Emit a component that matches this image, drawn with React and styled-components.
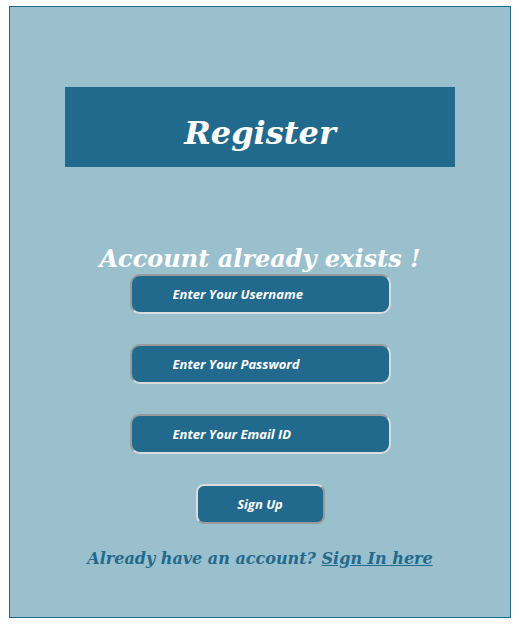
import React from 'react';
import styled, { createGlobalStyle } from 'styled-components';

const color = {
	page: '#ffffff',
	panel: '#9abfcd',
	blue: '#226a8d',
	white: '#ffffff',
	edgeDark: '#9a9a9a',
	edgeLight: '#dcdcdc',
};

const GlobalStyle = createGlobalStyle`
	body {
		margin: 0;
		background: ${color.page};
	}
	* {
		box-sizing: border-box;
	}
`;

export default function App() {
	return (
		<>
			<GlobalStyle />
			<Panel>
				<Header>
					<Title>Register</Title>
				</Header>
				<Message>Account already exists !</Message>
				<Form onSubmit={(e) => e.preventDefault()}>
					<Field type="text" placeholder="Enter Your Username" />
					<Field type="password" placeholder="Enter Your Password" />
					<Field type="email" placeholder="Enter Your Email ID" />
					<SubmitButton type="submit">Sign Up</SubmitButton>
				</Form>
				<Footer>
					Already have an account? <FooterLink href="#">Sign In here</FooterLink>
				</Footer>
			</Panel>
		</>
	);
}

const Panel = styled.div`
	width: 502px;
	height: 612px;
	margin: 6px 0 0 9px;
	padding-top: 80px;
	display: flex;
	flex-direction: column;
	align-items: center;
	border: 1px solid ${color.blue};
	background-color: ${color.panel};
`;

const Header = styled.div`
	width: 390px;
	height: 80px;
	padding-top: 12px;
	display: flex;
	align-items: center;
	justify-content: center;
	background-color: ${color.blue};
`;

const Title = styled.h1`
	margin: 0;
	font-family: 'DejaVu Serif', serif;
	font-style: italic;
	font-weight: bold;
	font-size: 32px;
	line-height: 1;
	color: ${color.white};
`;

const Message = styled.h2`
	margin: 78px 0 1px;
	font-family: 'DejaVu Serif', serif;
	font-style: italic;
	font-weight: bold;
	font-size: 24px;
	line-height: 28px;
	color: ${color.white};
`;

const Form = styled.form`
	display: flex;
	flex-direction: column;
	align-items: center;
	gap: 30px;
`;

const Field = styled.input`
	width: 261px;
	height: 40px;
	padding: 0 0 0 41px;
	border: 2px solid;
	border-color: ${color.edgeDark} ${color.edgeLight} ${color.edgeLight} ${color.edgeDark};
	border-radius: 10px;
	background-color: ${color.blue};
	font-family: 'Open Sans', sans-serif;
	font-style: italic;
	font-weight: bold;
	font-size: 13px;
	color: ${color.white};
	outline: none;

	&::placeholder {
		color: ${color.white};
		opacity: 1;
	}
`;

const SubmitButton = styled.button`
	width: 129px;
	height: 40px;
	border: 2px solid;
	border-color: ${color.edgeLight} ${color.edgeDark} ${color.edgeDark} ${color.edgeLight};
	border-radius: 8px;
	background-color: ${color.blue};
	font-family: 'Open Sans', sans-serif;
	font-style: italic;
	font-weight: bold;
	font-size: 13px;
	color: ${color.white};
	cursor: pointer;
`;

const Footer = styled.p`
	margin: 25px 0 0;
	font-family: 'DejaVu Serif', serif;
	font-style: italic;
	font-weight: bold;
	font-size: 16px;
	line-height: 20px;
	color: ${color.blue};
`;

const FooterLink = styled.a`
	color: ${color.blue};
	text-decoration: underline;
`;
